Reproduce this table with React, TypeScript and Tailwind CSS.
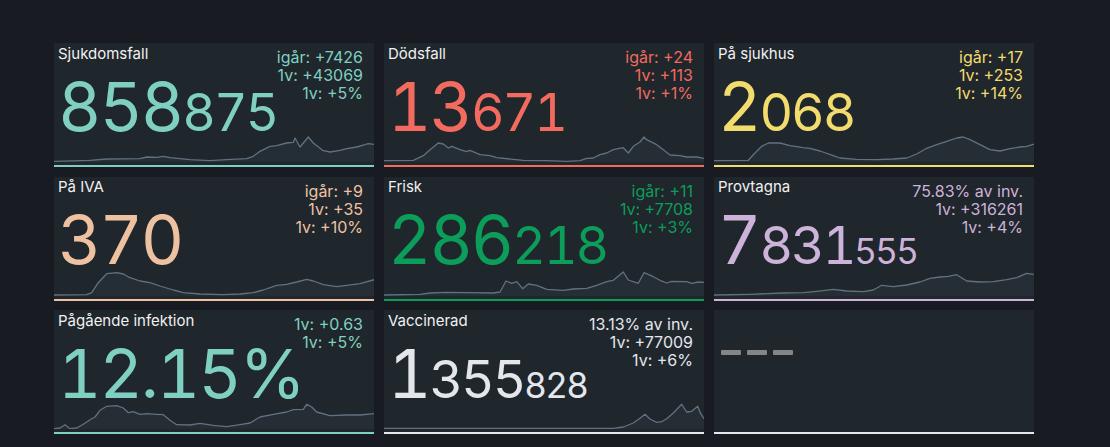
import React from 'react';

type Pt = [number, number];

type Card = {
  title: string;
  value: string;
  stats: string[];
  text: string;
  border: string;
  // sparkline points measured off the screenshot (3x coords), x0 = left edge, base = chart floor
  chart: { x0: number; base: number; pts: Pt[] };
};

const cards: Card[] = [
  {
    title: 'Sjukdomsfall',
    value: '858875',
    stats: ['igår: +7426', '1v: +43069', '1v: +5%'],
    text: 'text-[#80d0c1]',
    border: 'border-[#80d0c1]',
    chart: {
      x0: 42,
      base: 397,
      pts: [
        [42, 395], [150, 392], [200, 388], [300, 387], [320, 382], [350, 383], [370, 380], [390, 384],
        [450, 390], [510, 393], [560, 390], [620, 387], [640, 380], [660, 365], [690, 350], [710, 348],
        [740, 340], [760, 338], [765, 325], [780, 352], [805, 322], [820, 340], [850, 363], [870, 367],
        [900, 362], [920, 357], [950, 352], [975, 345], [985, 342], [1002, 344],
      ],
    },
  },
  {
    title: 'Dödsfall',
    value: '13671',
    stats: ['igår: +24', '1v: +113', '1v: +1%'],
    text: 'text-[#f26b5e]',
    border: 'border-[#f26b5e]',
    chart: {
      x0: 12,
      base: 397,
      pts: [
        [12, 393], [100, 392], [130, 378], [150, 360], [175, 340], [190, 343], [205, 355], [215, 350],
        [240, 360], [260, 366], [270, 362], [300, 375], [330, 378], [350, 384], [400, 389], [430, 392],
        [500, 393], [560, 395], [600, 393], [620, 386], [640, 385], [660, 375], [680, 370], [700, 360],
        [730, 354], [745, 370], [760, 350], [780, 337], [792, 322], [800, 330], [830, 345], [850, 360],
        [870, 376], [900, 378], [920, 382], [950, 382], [972, 386],
      ],
    },
  },
  {
    title: 'På sjukhus',
    value: '2068',
    stats: ['igår: +17', '1v: +253', '1v: +14%'],
    text: 'text-[#f2dc6d]',
    border: 'border-[#f2dc6d]',
    chart: {
      x0: 42,
      base: 397,
      pts: [
        [42, 393], [145, 392], [160, 375], [185, 350], [205, 340], [240, 340], [270, 348], [310, 354],
        [330, 356], [360, 364], [400, 378], [420, 385], [470, 389], [530, 390], [580, 388], [620, 385],
        [650, 373], [680, 356], [710, 345], [740, 335], [770, 325], [790, 322], [810, 330], [840, 345],
        [870, 360], [900, 364], [930, 357], [960, 352], [980, 350], [1002, 343],
      ],
    },
  },
  {
    title: 'På IVA',
    value: '370',
    stats: ['igår: +9', '1v: +35', '1v: +10%'],
    text: 'text-[#eec2a1]',
    border: 'border-[#eec2a1]',
    chart: {
      x0: 42,
      base: 390,
      pts: [
        [42, 387], [140, 386], [155, 380], [175, 350], [200, 323], [230, 320], [250, 324], [270, 335],
        [300, 345], [330, 350], [360, 360], [400, 372], [430, 380], [480, 384], [550, 386], [600, 384],
        [640, 380], [670, 372], [710, 358], [740, 355], [770, 348], [800, 340], [820, 345], [850, 356],
        [890, 362], [920, 358], [960, 353], [1002, 341],
      ],
    },
  },
  {
    title: 'Frisk',
    value: '286218',
    stats: ['igår: +11', '1v: +7708', '1v: +3%'],
    text: 'text-[#0d9d5a]',
    border: 'border-[#0d9d5a]',
    chart: {
      x0: 12,
      base: 390,
      pts: [
        [12, 387], [120, 385], [150, 381], [200, 379], [260, 380], [340, 381], [360, 378], [378, 345],
        [395, 352], [410, 347], [428, 368], [445, 354], [470, 358], [500, 370], [550, 373], [580, 369],
        [620, 367], [650, 358], [680, 347], [700, 343], [730, 318], [745, 342], [775, 352], [792, 320],
        [820, 332], [840, 343], [860, 351], [875, 346], [920, 347], [935, 352], [955, 348], [972, 349],
      ],
    },
  },
  {
    title: 'Provtagna',
    value: '7831555',
    stats: ['75.83% av inv.', '1v: +316261', '1v: +4%'],
    text: 'text-[#cdb2d9]',
    border: 'border-[#cdb2d9]',
    chart: {
      x0: 42,
      base: 390,
      pts: [
        [42, 387], [150, 385], [250, 381], [310, 380], [350, 376], [400, 370], [440, 375], [490, 377],
        [520, 372], [545, 358], [580, 362], [620, 357], [660, 348], [690, 337], [720, 333], [745, 331],
        [770, 326], [800, 345], [840, 348], [880, 347], [920, 341], [950, 335], [980, 322], [1002, 325],
      ],
    },
  },
  {
    title: 'Pågående infektion',
    value: '12.15%',
    stats: ['1v: +0.63', '1v: +5%'],
    text: 'text-[#80d0c1]',
    border: 'border-[#80d0c1]',
    chart: {
      x0: 42,
      base: 396,
      pts: [
        [42, 395], [60, 393], [75, 383], [90, 395], [110, 393], [130, 382], [150, 368], [165, 360],
        [180, 340], [200, 328], [230, 326], [250, 333], [265, 347], [280, 344], [300, 352], [320, 350],
        [350, 352], [370, 353], [390, 370], [410, 383], [450, 384], [480, 379], [520, 385], [560, 389],
        [600, 383], [630, 378], [660, 360], [700, 352], [740, 345], [760, 338], [790, 337], [800, 322],
        [815, 330], [830, 345], [870, 356], [920, 354], [960, 354], [1002, 350],
      ],
    },
  },
  {
    title: 'Vaccinerad',
    value: '1355828',
    stats: ['13.13% av inv.', '1v: +77009', '1v: +6%'],
    text: 'text-[#e4e6ec]',
    border: 'border-[#e4e6ec]',
    chart: {
      x0: 12,
      base: 396,
      pts: [
        [12, 394], [700, 394], [730, 390], [760, 378], [780, 364], [795, 352], [810, 366], [830, 376],
        [845, 374], [860, 365], [880, 348], [905, 322], [920, 345], [935, 343], [953, 328], [962, 350],
        [972, 365],
      ],
    },
  },
];

// thousands / units shrink step by step, like the original counter
const groupSizes = [
  'text-[67px] tracking-[-0.03em]',
  'text-[52px] tracking-[-0.04em]',
  'text-[35px] tracking-[-0.05em]',
];

function splitGroups(v: string) {
  if (!/^\d+$/.test(v)) return [v];
  const out: string[] = [];
  for (let end = v.length; end > 0; end -= 3) out.unshift(v.slice(Math.max(0, end - 3), end));
  return out;
}

function Sparkline({ chart }: { chart: Card['chart'] }) {
  const H = 28;
  const pts = chart.pts.map(([x, y]) => [(x - chart.x0) / 3, H - (chart.base - y) / 3]);
  const line = pts.map(([x, y], i) => `${i ? 'L' : 'M'}${x.toFixed(1)} ${y.toFixed(1)}`).join(' ');
  const last = pts[pts.length - 1];
  const area = `${line} L${last[0].toFixed(1)} ${H} L${pts[0][0].toFixed(1)} ${H} Z`;
  return (
    <svg
      className="absolute bottom-[3px] left-0"
      width={320}
      height={H}
      viewBox={`0 0 320 ${H}`}
    >
      <path d={area} fill="#252e34" />
      <path d={line} fill="none" stroke="#627180" strokeWidth={1.3} strokeLinejoin="round" />
    </svg>
  );
}

function StatCard({ card }: { card: Card }) {
  const groups = splitGroups(card.value);
  return (
    <div className={`relative h-[124px] overflow-hidden border-b-2 bg-[#1f262c] pl-1 pt-[1.5px] ${card.border}`}>
      <Sparkline chart={card.chart} />
      <div className="relative text-[15px] leading-[18px] text-[#f1f1f1]">{card.title}</div>
      <div className={`absolute right-[11px] top-[5px] text-right text-[16px] leading-[18px] ${card.text}`}>
        {card.stats.map((s) => (
          <div key={s}>{s}</div>
        ))}
      </div>
      <div className={`relative mt-[10px] w-fit whitespace-nowrap text-[67px] leading-none tabular-nums ${card.text}`}>
        {groups.map((g, i) => (
          <span key={i} className={groupSizes[Math.min(i, 2)]}>
            {g}
          </span>
        ))}
      </div>
    </div>
  );
}

function EmptyCard() {
  return (
    <div className="h-[124px] border-b-2 border-[#e4e6ec] bg-[#1f262c] pl-[7px] pt-[40px]">
      <div className="flex gap-[6px]">
        <div className="h-[5px] w-[20px] rounded-[1px] bg-[#858585]" />
        <div className="h-[5px] w-[20px] rounded-[1px] bg-[#858585]" />
        <div className="h-[5px] w-[20px] rounded-[1px] bg-[#858585]" />
      </div>
    </div>
  );
}

export default function App() {
  return (
    <div className="h-screen w-full bg-[#181b21] pl-[54px] pt-[43px] font-[family-name:Inter,sans-serif]">
      <div className="grid grid-cols-[repeat(3,320px)] gap-x-[10px] gap-y-[9.5px]">
        {cards.map((c) => (
          <StatCard key={c.title} card={c} />
        ))}
        <EmptyCard />
      </div>
    </div>
  );
}
